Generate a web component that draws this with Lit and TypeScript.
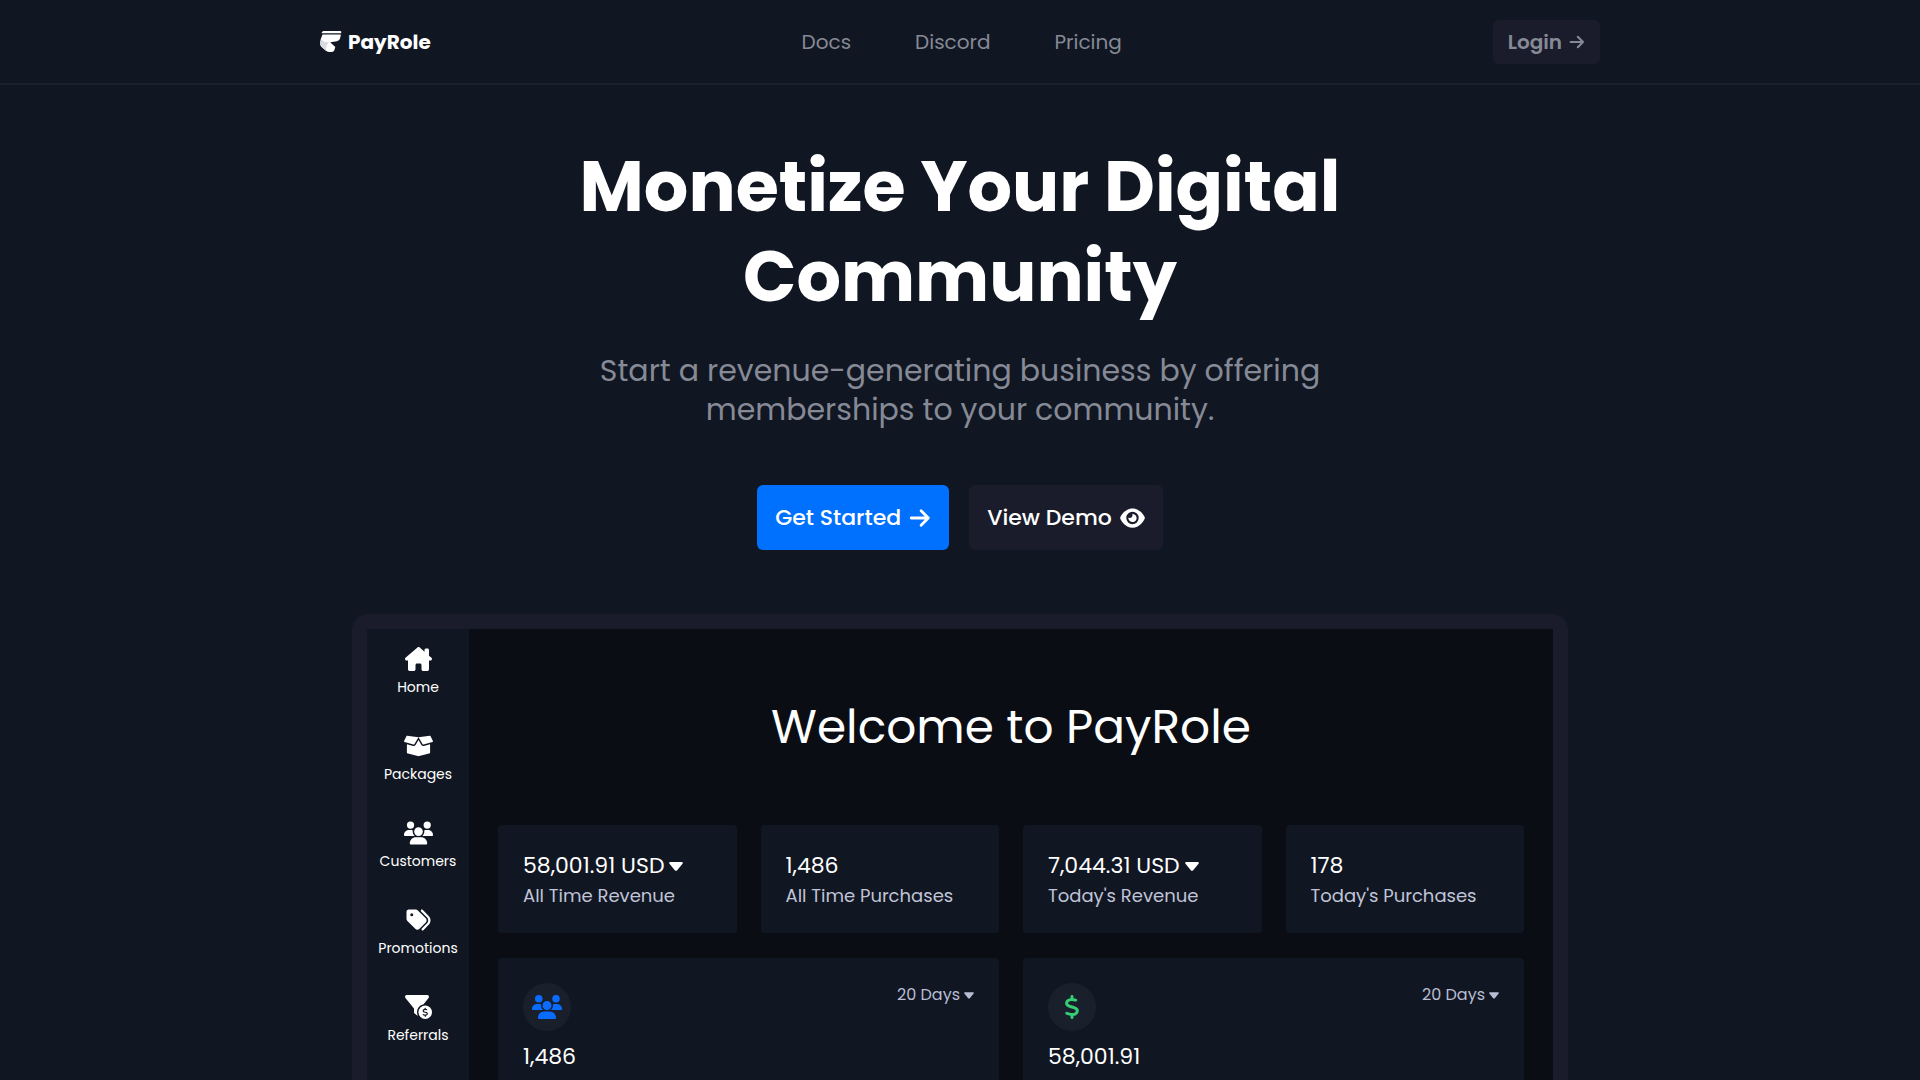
import { LitElement, html, css, svg } from "lit";
import { customElement, property } from "lit/decorators.js";

const DOLLAR =
  "M160 0c17.7 0 32 14.3 32 32V67.7c1.6 .2 3.1 .4 4.7 .7c.4 .1 .7 .1 1.1 .2l48 8.8c17.4 3.2 28.9 19.9 25.7 37.2s-19.9 28.9-37.2 25.7l-47.5-8.7c-31.3-4.6-58.9-1.5-78.3 6.2s-27.2 18.3-29 28.1c-2 10.7-.5 16.7 1.2 20.4c1.8 3.9 5.5 8.3 12.8 13.2c16.3 10.7 41.3 17.7 73.7 26.3l2.9 .8c28.6 7.6 63.6 16.8 89.6 33.8c14.2 9.3 27.6 21.9 35.9 39.5c8.5 17.9 10.3 37.9 6.4 59.2c-6.9 38-33.1 63.4-65.6 76.7c-13.7 5.6-28.6 9.2-44.4 11V480c0 17.7-14.3 32-32 32s-32-14.3-32-32V445.1c-.4-.1-.9-.1-1.3-.2l-.2 0 0 0c-24.4-3.8-64.5-14.3-91.5-26.3c-16.1-7.2-23.4-26.1-16.2-42.2s26.1-23.4 42.2-16.2c20.9 9.3 55.3 18.5 75.2 21.6c31.9 4.7 58.2 2 76-5.3c16.9-6.9 24.6-16.9 26.8-28.9c1.9-10.6 .4-16.7-1.3-20.4c-1.9-4-5.6-8.4-13-13.3c-16.4-10.7-41.5-17.7-74-26.3l-2.8-.7 0 0C119.4 279.3 84.4 270 58.4 253c-14.2-9.3-27.5-22-35.8-39.6c-8.4-17.9-10.1-37.9-6.1-59.2C23.7 116 52.3 91.2 84.8 78.3c13.3-5.3 27.9-8.9 43.2-11V32c0-17.7 14.3-32 32-32z";

const ICONS: Record<string, { box: string; art: unknown }> = {
  logo: {
    box: "0 0 22 22",
    art: svg`<path d="M3.500 0H20Q21.500 0 21.300 1.200L21 2.300H1.500Q1.800 .4 3.500 0z"/><path d="M2.500 3.600H20.900L20.200 7Q19.600 9.800 17 10.300L10.200 11.300L15.300 16L14.300 19.300Q13.700 21 11.800 21H9.500Q7.600 21 6 19.700L1.600 16Q.2 14.700 .2 12.800Q.2 8 2.500 3.600z"/><path d="M.9 8.500Q.2 10.500 .2 12.800Q.2 14.700 1.600 16L6 19.700Q5.500 15 9 11.300Q4 11.500 .9 8.500z" fill="#d9dbe0"/>`,
  },
  arrow: {
    box: "0 0 20 20",
    art: svg`<path d="M2 10H17.500M11 3.500L17.500 10L11 16.500" fill="none" stroke="currentColor" stroke-width="2.600" stroke-linecap="round" stroke-linejoin="round"/>`,
  },
  eye: {
    box: "0 0 576 512",
    art: svg`<path d="M288 32c-80.8 0-145.5 36.8-192.6 80.6C48.6 156 17.3 208 2.5 243.7c-3.3 7.9-3.3 16.7 0 24.6C17.3 304 48.6 356 95.4 399.4C142.5 443.2 207.2 480 288 480s145.5-36.8 192.6-80.6c46.8-43.5 78.1-95.4 93-131.1c3.3-7.9 3.3-16.7 0-24.6c-14.9-35.7-46.2-87.7-93-131.1C433.5 68.8 368.8 32 288 32zM144 256a144 144 0 1 1 288 0 144 144 0 1 1 -288 0zm144-64c0 35.3-28.7 64-64 64c-7.1 0-13.9-1.2-20.3-3.3c-5.5-1.8-11.9 1.6-11.7 7.4c.3 6.9 1.3 13.8 3.2 20.7c13.7 51.2 66.4 81.6 117.6 67.9s81.6-66.4 67.9-117.6c-11.1-41.5-47.8-69.4-88.6-71.1c-5.8-.2-9.2 6.1-7.4 11.7c2.1 6.4 3.3 13.2 3.3 20.3z"/>`,
  },
  caret: {
    box: "0 0 14 9",
    art: svg`<path d="M1.200 0H12.800Q14.400 .3 13.500 1.800L8.200 8.200Q7 9.400 5.800 8.200L.5 1.800Q-.4 .3 1.200 0z"/>`,
  },
  home: {
    box: "0 0 576 512",
    art: svg`<path d="M575.8 255.5c0 18-15 32.1-32 32.1h-32l.7 160.2c0 2.7-.2 5.4-.5 8.1V472c0 22.1-17.9 40-40 40H456c-1.1 0-2.2 0-3.3-.1c-1.4 .1-2.8 .1-4.2 .1H416 392c-22.1 0-40-17.9-40-40V448 384c0-17.7-14.3-32-32-32H256c-17.7 0-32 14.3-32 32v64 24c0 22.1-17.9 40-40 40H160 128.1c-1.5 0-3-.1-4.5-.2c-1.2 .1-2.4 .2-3.6 .2H104c-22.1 0-40-17.9-40-40V360c0-.9 0-1.900 .1-2.800V287.600H32c-18 0-32-14-32-32.100c0-9 3-17 10-24L266.400 8c7-7 15-8 22-8s15 2 21 7L416 100.700V64c0-17.700 14.300-32 32-32h32c17.700 0 32 14.300 32 32V185l52.800 46.400c8 7 12 15 11 24z"/>`,
  },
  box: {
    box: "0 0 640 512",
    art: svg`<path d="M425.7 256c-16.900 0-32.800-9-41.400-23.400L320 126l-64.200 106.600c-8.700 14.500-24.600 23.500-41.500 23.500-4.500 0-9-.6-13.300-1.900L64 215v178c0 14.700 10 27.500 24.200 31l216.200 54.100c10.200 2.500 20.900 2.500 31 0L551.800 424c14.200-3.600 24.200-16.400 24.200-31V215l-137 39.100c-4.300 1.300-8.800 1.900-13.300 1.900zm212.600-112.200L586.800 41c-3.100-6.200-9.800-9.800-16.700-8.900L320 64l91.700 152.100c3.800 6.300 11.400 9.300 18.500 7.300l197.900-56.500c9.900-2.900 14.700-13.900 10.200-23.100zM53.200 41L1.700 143.800c-4.600 9.200.3 20.200 10.100 23l197.900 56.500c7.100 2 14.700-1 18.500-7.300L320 64 69.800 32.100c-6.900-.8-13.500 2.700-16.600 8.900z"/>`,
  },
  users: {
    box: "0 0 640 512",
    art: svg`<path d="M144 0a80 80 0 1 1 0 160A80 80 0 1 1 144 0zM512 0a80 80 0 1 1 0 160A80 80 0 1 1 512 0zM0 298.7C0 239.8 47.8 192 106.7 192h42.7c15.9 0 31 3.5 44.6 9.7c-1.3 7.2-1.9 14.7-1.9 22.3c0 38.2 16.8 72.5 43.3 96c-.2 0-.4 0-.7 0H21.3C9.6 320 0 310.4 0 298.7zM405.3 320c-.2 0-.4 0-.7 0c26.6-23.5 43.3-57.8 43.3-96c0-7.6-.7-15-1.9-22.3c13.6-6.3 28.7-9.7 44.6-9.7h42.7C592.2 192 640 239.8 640 298.7c0 11.8-9.6 21.3-21.3 21.3H405.3zM224 224a96 96 0 1 1 192 0 96 96 0 1 1 -192 0zM128 485.3C128 411.7 187.7 352 261.3 352H378.7C452.3 352 512 411.7 512 485.3c0 14.7-11.9 26.7-26.7 26.7H154.7c-14.7 0-26.7-11.9-26.7-26.7z"/>`,
  },
  tags: {
    box: "0 0 512 512",
    art: svg`<path d="M345 39.1L472.8 168.4c52.4 53 52.4 138.2 0 191.2L360.8 472.9c-9.3 9.4-24.5 9.5-33.9 .2s-9.5-24.5-.2-33.9L438.6 325.9c33.9-34.3 33.9-89.4 0-123.7L310.9 72.9c-9.3-9.4-9.2-24.6 .2-33.9s24.6-9.2 33.9 .2zM0 229.5V80C0 53.5 21.5 32 48 32H197.5c17 0 33.3 6.7 45.3 18.7l168 168c25 25 25 65.5 0 90.5L277.3 442.7c-25 25-65.5 25-90.5 0l-168-168C6.7 262.7 0 246.5 0 229.5zM144 144a32 32 0 1 0 -64 0 32 32 0 1 0 64 0z"/>`,
  },
  funnel: {
    box: "0 0 576 512",
    art: svg`<path d="M3.9 22.9C10.5 8.9 24.5 0 40 0H472c15.5 0 29.5 8.9 36.1 22.9s4.6 30.5-5.2 42.5L396.4 195.6C316.2 212.1 256 283 256 368c0 27.4 6.3 53.4 17.5 76.5c-1.6-.8-3.2-1.8-4.7-2.9l-64-48c-8.1-6-12.8-15.5-12.8-25.6V288.9L9 65.3C-.7 53.4-2.8 36.8 3.900 22.9z"/><circle cx="432" cy="368" r="144"/><path d=${DOLLAR} fill="#111722" transform="translate(370 270) scale(.385)"/>`,
  },
  dollar: { box: "0 0 320 512", art: svg`<path d=${DOLLAR}/>` },
};

@customElement("ui-icon")
class UiIcon extends LitElement {
  @property() name = "";

  static styles = css`
    :host {
      display: inline-flex;
      flex: none;
    }
    .glyph {
      width: 100%;
      height: 100%;
      fill: currentColor;
    }
  `;

  render() {
    const icon = ICONS[this.name];
    return html`<svg class="glyph" viewBox=${icon.box} aria-hidden="true">${icon.art}</svg>`;
  }
}

@customElement("dashboard-preview")
class DashboardPreview extends LitElement {
  static styles = css`
    :host {
      display: block;
    }
    * {
      box-sizing: border-box;
    }
    .frame {
      display: flex;
      border: 15px solid #1a1c2c;
      border-radius: 16px;
      background: #0b0d14;
    }
    .side {
      flex: none;
      width: 102px;
      padding-top: 18px;
      background: #111722;
      display: flex;
      flex-direction: column;
      gap: 37px;
    }
    .item {
      display: flex;
      flex-direction: column;
      align-items: center;
      gap: 6px;
      color: #fff;
      text-decoration: none;
      font-size: 14px;
      line-height: 20px;
    }
    .item-icon {
      width: 29px;
      height: 24px;
    }
    .main {
      flex: 1;
      min-width: 0;
      padding: 64px 29px 48px;
    }
    .welcome {
      margin: 0 0 64px;
      font-size: 47px;
      line-height: 68px;
      font-weight: 400;
      text-align: center;
      color: #fff;
    }
    .grid {
      display: grid;
      grid-template-columns: repeat(4, 1fr);
      gap: 25px 24px;
    }
    .card {
      background: #111722;
      border-radius: 4px;
      padding: 25px;
    }
    .wide {
      grid-column: span 2;
      min-height: 320px;
    }
    .stat {
      min-height: 108px;
      padding-bottom: 22px;
    }
    .value,
    .range {
      display: flex;
      align-items: center;
      border: 0;
      padding: 0;
      background: none;
      font-family: inherit;
      white-space: nowrap;
    }
    .value {
      gap: 5px;
      color: #fff;
      font-size: 22px;
      line-height: 32px;
    }
    .label {
      color: #c0c4d8;
      font-size: 18px;
      line-height: 28px;
    }
    .caret {
      width: 14px;
      height: 9px;
    }
    .range {
      gap: 4px;
      color: #b9bdd3;
      font-size: 16px;
      line-height: 24px;
    }
    .range .caret {
      width: 10px;
      height: 7px;
    }
    .top {
      display: flex;
      align-items: flex-start;
      justify-content: space-between;
      margin-bottom: 10px;
    }
    .badge {
      width: 48px;
      height: 48px;
      border-radius: 50%;
      background: #19202c;
      display: grid;
      place-items: center;
    }
    .badge-icon {
      width: 30px;
      height: 24px;
    }
    .blue {
      color: #0a6cff;
    }
    .green {
      color: #35cd75;
    }
  `;

  private items = [
    ["home", "Home"],
    ["box", "Packages"],
    ["users", "Customers"],
    ["tags", "Promotions"],
    ["funnel", "Referrals"],
  ];

  private stats: [string, string, boolean][] = [
    ["58,001.91 USD", "All Time Revenue", true],
    ["1,486", "All Time Purchases", false],
    ["7,044.31 USD", "Today's Revenue", true],
    ["178", "Today's Purchases", false],
  ];

  private charts = [
    ["users", "blue", "1,486"],
    ["dollar", "green", "58,001.91"],
  ];

  render() {
    return html`<section class="frame">
      <nav class="side">
        ${this.items.map(
          ([icon, text]) => html`<a class="item" href="#${icon}">
            <ui-icon class="item-icon" name=${icon}></ui-icon>${text}
          </a>`
        )}
      </nav>
      <div class="main">
        <h2 class="welcome">Welcome to PayRole</h2>
        <div class="grid">
          ${this.stats.map(
            ([value, label, menu]) => html`<div class="card stat">
              ${menu
                ? html`<button class="value" type="button">
                    ${value}<ui-icon class="caret" name="caret"></ui-icon>
                  </button>`
                : html`<div class="value">${value}</div>`}
              <div class="label">${label}</div>
            </div>`
          )}
          ${this.charts.map(
            ([icon, tone, value]) => html`<div class="card wide">
              <div class="top">
                <span class="badge"><ui-icon class="badge-icon ${tone}" name=${icon}></ui-icon></span>
                <button class="range" type="button">
                  20 Days<ui-icon class="caret" name="caret"></ui-icon>
                </button>
              </div>
              <div class="value">${value}</div>
            </div>`
          )}
        </div>
      </div>
    </section>`;
  }
}

@customElement("app-root")
class AppRoot extends LitElement {
  static styles = css`
    :host {
      display: block;
      height: 100vh;
      overflow: hidden;
      background: #111722;
      color: #fff;
      font-family: Poppins, Inter, "Open Sans", sans-serif;
    }
    * {
      box-sizing: border-box;
    }
    .header {
      border-bottom: 2px solid #1a202c;
    }
    .bar {
      max-width: 1280px;
      margin: 0 auto;
      padding: 20px 0 19px;
      display: flex;
      align-items: center;
      justify-content: space-between;
      font-size: 20px;
      line-height: 28px;
    }
    .brand {
      display: flex;
      align-items: center;
      gap: 6px;
      color: #fff;
      font-weight: 700;
      text-decoration: none;
    }
    .brand-icon {
      width: 22px;
      height: 22px;
    }
    .nav {
      display: flex;
      gap: 64px;
    }
    .link {
      color: #868a96;
      text-decoration: none;
    }
    .login {
      display: flex;
      align-items: center;
      gap: 7px;
      padding: 8px 15px;
      border: 0;
      border-radius: 6px;
      background: #1a1c2c;
      color: #868a96;
      font: inherit;
      font-weight: 600;
    }
    .login-icon {
      width: 16px;
      height: 16px;
    }
    .hero {
      max-width: 800px;
      margin: 0 auto;
      padding: 57px 0 64px;
      text-align: center;
    }
    .title {
      margin: 0;
      font-size: 70px;
      line-height: 90px;
      font-weight: 700;
    }
    .lead {
      max-width: 750px;
      margin: 29px auto 56px;
      color: #868a96;
      font-size: 30px;
      line-height: 39px;
    }
    .actions {
      display: flex;
      justify-content: center;
      gap: 20px;
    }
    .cta {
      display: flex;
      align-items: center;
      gap: 8px;
      padding: 16px 18px;
      border: 0;
      border-radius: 6px;
      background: #0070ff;
      color: #fff;
      font: inherit;
      font-size: 22px;
      line-height: 33px;
      font-weight: 500;
    }
    .cta.quiet {
      background: #1a1c2c;
    }
    .arrow {
      width: 22px;
      height: 22px;
    }
    .eye {
      width: 25px;
      height: 22px;
    }
    .preview {
      max-width: 1216px;
      margin: 0 auto;
    }
  `;

  render() {
    return html`
      <header class="header">
        <div class="bar">
          <a class="brand" href="#top"><ui-icon class="brand-icon" name="logo"></ui-icon>PayRole</a>
          <nav class="nav">
            ${["Docs", "Discord", "Pricing"].map(
              (text) => html`<a class="link" href="#${text.toLowerCase()}">${text}</a>`
            )}
          </nav>
          <button class="login" type="button">
            Login<ui-icon class="login-icon" name="arrow"></ui-icon>
          </button>
        </div>
      </header>
      <main>
        <section class="hero">
          <h1 class="title">Monetize Your Digital Community</h1>
          <p class="lead">
            Start a revenue-generating business by offering memberships to your community.
          </p>
          <div class="actions">
            <button class="cta" type="button">
              Get Started<ui-icon class="arrow" name="arrow"></ui-icon>
            </button>
            <button class="cta quiet" type="button">
              View Demo<ui-icon class="eye" name="eye"></ui-icon>
            </button>
          </div>
        </section>
        <dashboard-preview class="preview"></dashboard-preview>
      </main>
    `;
  }
}
